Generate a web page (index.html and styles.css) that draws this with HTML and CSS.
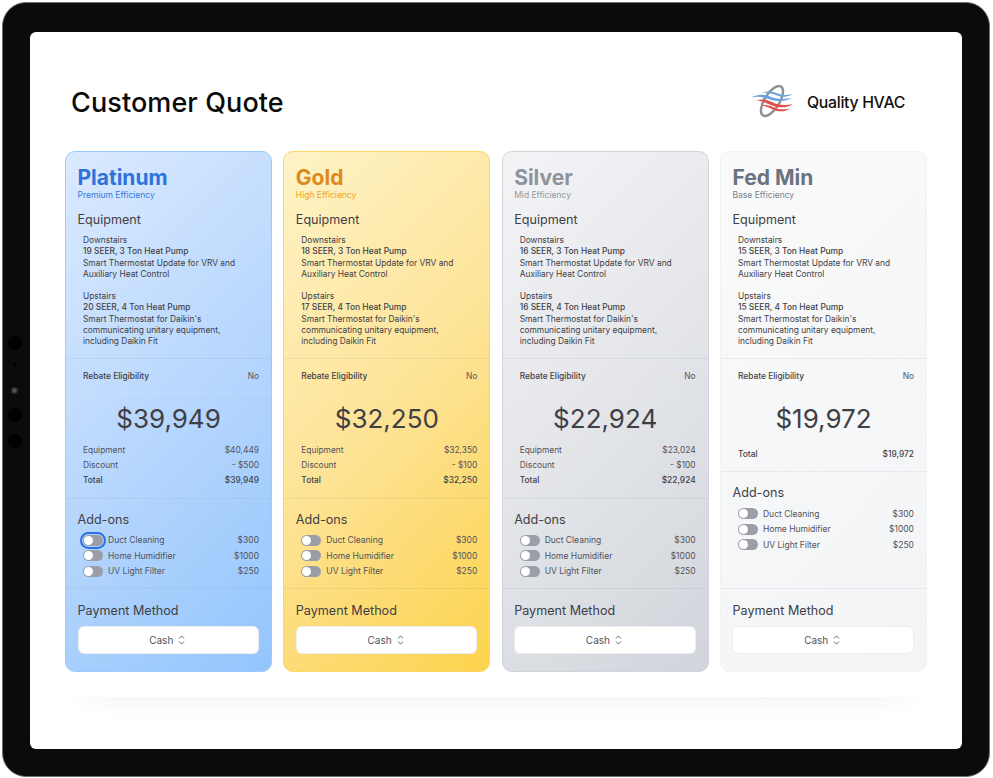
FILE: index.html
```html
<!DOCTYPE html>
<html lang="en">
<head>
  <meta charset="UTF-8" />
  <meta name="viewport" content="width=device-width, initial-scale=1.0"/>
  <title>Customer Quote</title>
  <link rel="stylesheet" href="styles.css">
</head>
<body>

  <div class="tablet">
    <!-- SIDE SENSORS -->
    <div class="sensors">
      <span class="dot"></span>
      <span class="dot tiny"></span>
      <span class="dot lens"></span>
      <span class="dot"></span>
      <span class="dot"></span>
    </div>

    <div class="screen">
      <header class="top">
        <h1>Customer Quote</h1>
        <div class="brand">
          <svg class="brand-logo" viewBox="0 0 44 34" width="44" height="34" aria-hidden="true">
            <ellipse cx="21" cy="16" rx="7.500" ry="17" transform="rotate(32 21 16)" fill="none" stroke="#8d9095" stroke-width="2.400"/>
            <path d="M0 12.500C7 9 13 9 19 11.500s14 3.500 23 1c-7 4-15 4.500-23 2S7 11 0 12.500z" fill="#6da3e0"/>
            <path d="M11 8C17 5.500 22 6.500 27 8.500s10 2 15 .5c-5 3.300-11 3.500-16 1.500S17 7.500 11 8z" fill="#6da3e0"/>
            <path d="M5 15.500c6-2 11-1 17 2s13 3 20 1.500c-6 4-14 4.300-21 1.500S11 15.500 5 15.500z" fill="#e2504a"/>
            <path d="M10 20.500c5-1.300 9 0 13 2s10 2.500 16 1c-5 3.500-11 3.500-16 1.500s-8-4-13-4.500z" fill="#e2504a"/>
          </svg>
          <span class="brand-name">Quality HVAC</span>
        </div>
      </header>

      <div class="plans">

        <!-- PLATINUM -->
        <section class="plan platinum">
          <div class="plan-head">
            <h2>Platinum</h2>
            <p class="tier">Premium Efficiency</p>
            <h3>Equipment</h3>
            <div class="unit">
              <p>Downstairs</p>
              <p class="seer">19 SEER, 3 Ton Heat Pump</p>
              <p>Smart Thermostat Update for VRV and Auxiliary Heat Control</p>
            </div>
            <div class="unit">
              <p>Upstairs</p>
              <p class="seer">20 SEER, 4 Ton Heat Pump</p>
              <p>Smart Thermostat for Daikin's communicating unitary equipment, including Daikin Fit</p>
            </div>
          </div>
          <div class="rebate"><span>Rebate Eligibility</span><span>No</span></div>
          <div class="pricing">
            <div class="price">$39,949</div>
            <div class="row"><span>Equipment</span><span>$40,449</span></div>
            <div class="row"><span>Discount</span><span>- $500</span></div>
            <div class="row total"><span>Total</span><span>$39,949</span></div>
          </div>
          <div class="addons">
            <h3>Add-ons</h3>
            <div class="addon"><span class="toggle focused"></span><span class="addon-name">Duct Cleaning</span><span>$300</span></div>
            <div class="addon"><span class="toggle"></span><span class="addon-name">Home Humidifier</span><span>$1000</span></div>
            <div class="addon"><span class="toggle"></span><span class="addon-name">UV Light Filter</span><span>$250</span></div>
          </div>
          <div class="payment">
            <h3>Payment Method</h3>
            <button class="select">Cash
              <svg viewBox="0 0 8 12" width="7" height="10" aria-hidden="true"><path d="M1 4.200 4 1l3 3.200M1 7.800 4 11l3-3.200" fill="none" stroke="currentColor" stroke-width="1"/></svg>
            </button>
          </div>
        </section>

        <!-- GOLD -->
        <section class="plan gold">
          <div class="plan-head">
            <h2>Gold</h2>
            <p class="tier">High Efficiency</p>
            <h3>Equipment</h3>
            <div class="unit">
              <p>Downstairs</p>
              <p class="seer">18 SEER, 3 Ton Heat Pump</p>
              <p>Smart Thermostat Update for VRV and Auxiliary Heat Control</p>
            </div>
            <div class="unit">
              <p>Upstairs</p>
              <p class="seer">17 SEER, 4 Ton Heat Pump</p>
              <p>Smart Thermostat for Daikin's communicating unitary equipment, including Daikin Fit</p>
            </div>
          </div>
          <div class="rebate"><span>Rebate Eligibility</span><span>No</span></div>
          <div class="pricing">
            <div class="price">$32,250</div>
            <div class="row"><span>Equipment</span><span>$32,350</span></div>
            <div class="row"><span>Discount</span><span>- $100</span></div>
            <div class="row total"><span>Total</span><span>$32,250</span></div>
          </div>
          <div class="addons">
            <h3>Add-ons</h3>
            <div class="addon"><span class="toggle"></span><span class="addon-name">Duct Cleaning</span><span>$300</span></div>
            <div class="addon"><span class="toggle"></span><span class="addon-name">Home Humidifier</span><span>$1000</span></div>
            <div class="addon"><span class="toggle"></span><span class="addon-name">UV Light Filter</span><span>$250</span></div>
          </div>
          <div class="payment">
            <h3>Payment Method</h3>
            <button class="select">Cash
              <svg viewBox="0 0 8 12" width="7" height="10" aria-hidden="true"><path d="M1 4.200 4 1l3 3.200M1 7.800 4 11l3-3.200" fill="none" stroke="currentColor" stroke-width="1"/></svg>
            </button>
          </div>
        </section>

        <!-- SILVER -->
        <section class="plan silver">
          <div class="plan-head">
            <h2>Silver</h2>
            <p class="tier">Mid Efficiency</p>
            <h3>Equipment</h3>
            <div class="unit">
              <p>Downstairs</p>
              <p class="seer">16 SEER, 3 Ton Heat Pump</p>
              <p>Smart Thermostat Update for VRV and Auxiliary Heat Control</p>
            </div>
            <div class="unit">
              <p>Upstairs</p>
              <p class="seer">16 SEER, 4 Ton Heat Pump</p>
              <p>Smart Thermostat for Daikin's communicating unitary equipment, including Daikin Fit</p>
            </div>
          </div>
          <div class="rebate"><span>Rebate Eligibility</span><span>No</span></div>
          <div class="pricing">
            <div class="price">$22,924</div>
            <div class="row"><span>Equipment</span><span>$23,024</span></div>
            <div class="row"><span>Discount</span><span>- $100</span></div>
            <div class="row total"><span>Total</span><span>$22,924</span></div>
          </div>
          <div class="addons">
            <h3>Add-ons</h3>
            <div class="addon"><span class="toggle"></span><span class="addon-name">Duct Cleaning</span><span>$300</span></div>
            <div class="addon"><span class="toggle"></span><span class="addon-name">Home Humidifier</span><span>$1000</span></div>
            <div class="addon"><span class="toggle"></span><span class="addon-name">UV Light Filter</span><span>$250</span></div>
          </div>
          <div class="payment">
            <h3>Payment Method</h3>
            <button class="select">Cash
              <svg viewBox="0 0 8 12" width="7" height="10" aria-hidden="true"><path d="M1 4.200 4 1l3 3.200M1 7.800 4 11l3-3.200" fill="none" stroke="currentColor" stroke-width="1"/></svg>
            </button>
          </div>
        </section>

        <!-- FED MIN -->
        <section class="plan fedmin">
          <div class="plan-head">
            <h2>Fed Min</h2>
            <p class="tier">Base Efficiency</p>
            <h3>Equipment</h3>
            <div class="unit">
              <p>Downstairs</p>
              <p class="seer">15 SEER, 3 Ton Heat Pump</p>
              <p>Smart Thermostat Update for VRV and Auxiliary Heat Control</p>
            </div>
            <div class="unit">
              <p>Upstairs</p>
              <p class="seer">15 SEER, 4 Ton Heat Pump</p>
              <p>Smart Thermostat for Daikin's communicating unitary equipment, including Daikin Fit</p>
            </div>
          </div>
          <div class="rebate"><span>Rebate Eligibility</span><span>No</span></div>
          <div class="pricing">
            <div class="price">$19,972</div>
            <div class="row total"><span>Total</span><span>$19,972</span></div>
          </div>
          <div class="addons">
            <h3>Add-ons</h3>
            <div class="addon"><span class="toggle"></span><span class="addon-name">Duct Cleaning</span><span>$300</span></div>
            <div class="addon"><span class="toggle"></span><span class="addon-name">Home Humidifier</span><span>$1000</span></div>
            <div class="addon"><span class="toggle"></span><span class="addon-name">UV Light Filter</span><span>$250</span></div>
          </div>
          <div class="payment">
            <h3>Payment Method</h3>
            <button class="select">Cash
              <svg viewBox="0 0 8 12" width="7" height="10" aria-hidden="true"><path d="M1 4.200 4 1l3 3.200M1 7.800 4 11l3-3.200" fill="none" stroke="currentColor" stroke-width="1"/></svg>
            </button>
          </div>
        </section>

      </div>

      <div class="plans-shadow"></div>
    </div>
  </div>

</body>
</html>
```
FILE: styles.css
```css
* {
  box-sizing: border-box;
}
body {
  margin: 0;
  width: 993px;
  height: 778px;
  padding: 2px 3px 1px 2px;
  font-family: 'Inter', 'Liberation Sans', sans-serif;
  background: #fff;
  overflow: hidden;
}
p, h1, h2, h3 {
  margin: 0;
  font-weight: 400;
}
.tablet {
  position: relative;
  height: 775px;
  padding: 29px 27px 27px 27px;
  background: #0b0b0b;
  border: 1px solid #6f6f6f;
  border-radius: 24px;
}
.sensors {
  position: absolute;
  left: 3.500px;
  top: 333px;
  width: 16px;
  display: flex;
  flex-direction: column;
  align-items: center;
}
.dot {
  width: 14px;
  height: 14px;
  margin-bottom: 12.500px;
  border-radius: 50%;
  background: #020202;
}
.dot.tiny {
  width: 4px;
  height: 4px;
  margin-bottom: 20px;
}
.dot.lens {
  width: 7px;
  height: 7px;
  margin-bottom: 14px;
  background: radial-gradient(circle, #66666c 0%, #2c2c30 60%, #0b0b0b 100%);
}
.screen {
  height: 717px;
  padding: 0 35px;
  background: #fff;
  border-radius: 6px;
}
.top {
  height: 119px;
  padding: 53px 22px 0 6px;
  display: flex;
  justify-content: space-between;
  align-items: flex-start;
}
h1 {
  font-size: 27px;
  line-height: 36px;
  font-weight: 500;
  color: #0a0a0a;
  letter-spacing: 0.1px;
}
.brand {
  display: flex;
  align-items: center;
  gap: 12px;
  height: 34px;
}
.brand-name {
  font-size: 15.800px;
  font-weight: 500;
  color: #111;
  letter-spacing: -0.3px;
}
.plans {
  display: grid;
  grid-template-columns: repeat(4, 207px);
  justify-content: space-between;
}
.plan {
  height: 521px;
  display: flex;
  flex-direction: column;
  border: 1px solid;
  border-radius: 10px;
  color: #3f3f46;
}
.platinum {
  background: linear-gradient(135deg, #dbeafe 0%, #b8d7fd 50%, #93c5fd 100%);
  border-color: #9ccafd;
}
.platinum h2 { color: #2f72dc; }
.platinum .tier { color: #3b78dc; }
.gold {
  background: linear-gradient(135deg, #fef3c7 0%, #fde396 50%, #fcd34d 100%);
  border-color: #fcd765;
}
.gold h2 { color: #dd8a1c; }
.gold .tier { color: #f2a31d; }
.silver {
  background: linear-gradient(135deg, #f3f4f6 0%, #e3e5e9 50%, #d1d5db 100%);
  border-color: #d1d5db;
}
.silver h2 { color: #8f949c; }
.silver .tier { color: #9298a1; }
.fedmin {
  background: linear-gradient(135deg, #fafafa 0%, #f6f7f8 50%, #f3f4f6 100%);
  border-color: #f1f2f4;
}
.fedmin h2 { color: #6b7280; }
.fedmin .tier { color: #7d838d; }

.plan-head {
  height: 207px;
  padding: 13px 12px 0 11.500px;
  border-bottom: 1px solid rgba(120, 130, 150, 0.12);
}
h2 {
  font-size: 21px;
  line-height: 25px;
  font-weight: 700;
}
.tier {
  font-size: 8.500px;
  line-height: 11px;
}
h3 {
  font-size: 12.600px;
  line-height: 16px;
  color: #3f3f46;
}
.plan-head h3 {
  margin-top: 11px;
}
.unit {
  margin: 7px 8px 0 5.500px;
  font-size: 8.400px;
  line-height: 11.250px;
  color: #3f3f46;
}
.unit + .unit {
  margin-top: 11px;
}
.seer {
  font-weight: 450;
}
.rebate {
  height: 34px;
  padding: 0 12px 0 17px;
  display: flex;
  justify-content: space-between;
  align-items: center;
  font-size: 8.400px;
  font-weight: 450;
  border-bottom: 1px solid rgba(255, 255, 255, 0.1);
}
.rebate span:last-child {
  font-weight: 400;
  color: #52525b;
}
.pricing {
  padding: 0 12px 9px 17px;
  border-bottom: 1px solid rgba(120, 130, 150, 0.12);
}
.price {
  text-align: center;
  font-size: 26px;
  line-height: 32px;
  padding-top: 10px;
  height: 50px;
  color: #3f3f46;
  margin-left: -5px;
}
.fedmin .price {
  height: 54px;
}
.row {
  display: flex;
  justify-content: space-between;
  font-size: 8.400px;
  line-height: 15.200px;
  color: #52525b;
}
.total {
  font-weight: 450;
  color: #3f3f46;
}
.addons {
  flex: 1;
  padding: 13px 12px 0 11.500px;
}
.addons h3 {
  margin-bottom: 5px;
}
.addon {
  display: flex;
  align-items: center;
  height: 15.400px;
  padding-left: 5.500px;
  font-size: 8.500px;
  color: #52525b;
}
.addon-name {
  flex: 1;
  margin-left: 5px;
}
.toggle {
  position: relative;
  width: 20px;
  height: 11px;
  border-radius: 6px;
  background: #9b9ea6;
}
.toggle::after {
  content: "";
  position: absolute;
  left: 1px;
  top: 1px;
  width: 9px;
  height: 9px;
  border-radius: 50%;
  background: #fff;
}
.toggle.focused {
  outline: 2px solid #2b6fe8;
  outline-offset: 1px;
}
.payment {
  height: 83px;
  padding: 14px 12px 0 11.500px;
  border-top: 1px solid rgba(120, 130, 150, 0.12);
}
.select {
  width: 100%;
  height: 28px;
  margin-top: 7px;
  padding: 0 2px 0 0;
  display: flex;
  justify-content: center;
  align-items: center;
  gap: 5px;
  font-family: inherit;
  font-size: 10px;
  color: #52525b;
  background: #fff;
  border: 1px solid rgba(230, 232, 236, 0.8);
  border-radius: 6px;
}
.plans-shadow {
  height: 20px;
  margin: 25px 5px 0;
  background: linear-gradient(to bottom, #f5f6f7, #fff);
  -webkit-mask-image: linear-gradient(to right, transparent, #000 6%, #000 94%, transparent);
}
```
